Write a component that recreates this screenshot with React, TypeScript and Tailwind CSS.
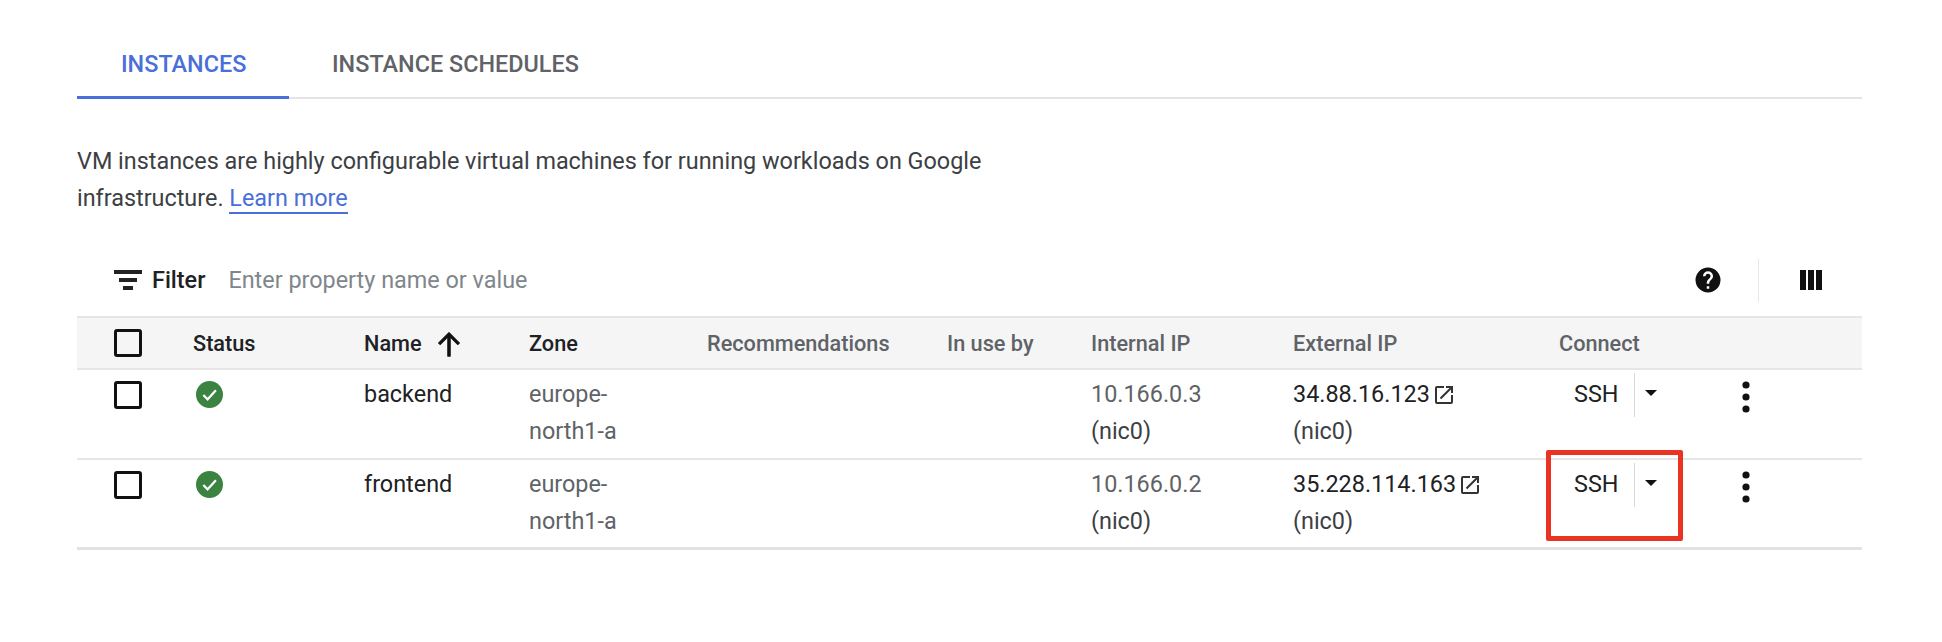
const columns = "grid grid-cols-[79px_171px_165px_178px_240px_144px_202px_266px_172px_1fr]";

function Checkbox() {
  return <div className="h-[28px] w-[28px] rounded-[3px] border-[3px] border-[#111]" />;
}

function StatusIcon() {
  return (
    <svg width="27" height="27" viewBox="0 0 24 24">
      <circle cx="12" cy="12" r="12" fill="#3a8341" />
      <path d="M6.5 12.5l3.8 3.8 7.4-8" fill="none" stroke="#fff" strokeWidth="2" />
    </svg>
  );
}

function OpenIcon() {
  return (
    <svg width="24" height="24" viewBox="0 0 24 24" fill="#333" className="ml-[2px] shrink-0">
      <path d="M19 19H5V5h7V3H5a2 2 0 0 0-2 2v14a2 2 0 0 0 2 2h14a2 2 0 0 0 2-2v-7h-2v7zM14 3v2h3.6l-9.8 9.8 1.4 1.4L19 6.4V10h2V3h-7z" />
    </svg>
  );
}

function Kebab() {
  return (
    <svg width="30" height="34" viewBox="0 0 30 34" fill="#111">
      <circle cx="15" cy="5" r="3.6" />
      <circle cx="15" cy="17" r="3.6" />
      <circle cx="15" cy="29" r="3.6" />
    </svg>
  );
}

function Row({ name, internal, external, last }: { name: string; internal: string; external: string; last?: boolean }) {
  return (
    <div className={`${columns} pl-[37px] ${last ? "h-[90px] border-b-[3px] border-[#e2e2e2]" : "h-[90px] border-b-2 border-[#e6e6e6]"}`}>
      <div className="pt-[11px]"><Checkbox /></div>
      <div className="pt-[11px] pl-[3px]"><StatusIcon /></div>
      <div className="pt-[6px] text-[#202124]">{name}</div>
      <div className="pt-[6px] text-[#5f6368]">europe-<br />north1-a</div>
      <div />
      <div />
      <div className="pt-[6px] text-[#5f6368]">{internal}<br /><span className="text-[#3c4043]">(nic0)</span></div>
      <div className="pt-[6px]">
        <div className="flex items-center text-[#202124]">{external}<OpenIcon /></div>
        <div className="text-[#3c4043]">(nic0)</div>
      </div>
      <div className="flex items-start pl-[15px] pt-[3px]">
        <span className="mt-[3px] w-[60px] text-[#202124]">SSH</span>
        <div className="h-[44px] w-px bg-[#d8d8d8]" />
        <div className="ml-[10px] mt-[17px] h-0 w-0 border-x-[6px] border-t-[6px] border-x-transparent border-t-[#111]" />
      </div>
      <div className="pt-[10px]"><Kebab /></div>
    </div>
  );
}

export default function App() {
  return (
    <div className="relative h-[642px] w-[1942px] overflow-hidden bg-white font-['Roboto',sans-serif] text-[23.4px] leading-[37px] pl-[77px] pr-[80px]">
      <div className="flex h-[99px] border-b-2 border-[#e4e4e4] pt-[44px] font-medium text-[#5f6368]">
        <div className="-mb-[2px] h-[55px] w-[212px] border-b-[3px] border-[#4a6fd8] pl-[44px] pt-[1px] leading-[38px] text-[#4a6fd8]">INSTANCES</div>
        <div className="pl-[43px] pt-[1px] leading-[38px]">INSTANCE SCHEDULES</div>
      </div>

      <p className="mt-[44px] w-[930px] text-[#3c4043]">
        VM instances are highly configurable virtual machines for running workloads on Google<br />
        infrastructure. <a className="border-b-2 border-[#4a6fd8] text-[#4a6fd8]">Learn more</a>
      </p>

      <div className="mt-[33px] flex h-[60px] items-center">
        <svg width="28" height="24" viewBox="0 0 28 24" fill="#222" className="ml-[37px]">
          <rect x="0" y="2" width="28" height="4" />
          <rect x="5" y="10" width="18" height="4" />
          <rect x="9" y="18" width="10" height="4" />
        </svg>
        <span className="ml-[10px] font-medium text-[#202124]">Filter</span>
        <span className="ml-[23px] text-[#80868b]">Enter property name or value</span>
        <div className="ml-auto flex items-center">
          <svg width="30" height="30" viewBox="0 0 24 24" fill="#111">
            <path d="M12 2a10 10 0 1 0 0 20 10 10 0 0 0 0-20zm1 17h-2v-2h2v2zm2.07-7.75l-.9.92c-.72.73-1.17 1.33-1.17 2.83h-2v-.5c0-1.1.45-2.1 1.17-2.83l1.24-1.26c.37-.36.59-.86.59-1.41a2 2 0 0 0-4 0H8a4 4 0 0 1 8 0c0 .88-.36 1.68-.93 2.25z" />
          </svg>
          <div className="ml-[35px] h-[43px] w-px bg-[#e6e6e6]" />
          <svg width="24" height="24" viewBox="0 0 24 24" fill="#111" className="ml-[40px] mr-[39px]">
            <rect x="1" y="2" width="6" height="20" />
            <rect x="9" y="2" width="6" height="20" />
            <rect x="17" y="2" width="6" height="20" />
          </svg>
        </div>
      </div>

      <div className={`${columns} mt-[6px] h-[54px] items-center border-y-2 border-[#e6e6e6] bg-[#f5f5f5] pl-[37px] text-[21.7px] font-medium text-[#5f6368]`}>
        <Checkbox />
        <span className="text-[#202124]">Status</span>
        <span className="flex items-center text-[#202124]">
          Name
          <svg width="32" height="32" viewBox="0 0 24 24" fill="#111" className="ml-[11px]">
            <path d="M4 12l1.41 1.41L11 7.83V22h2V7.83l5.58 5.59L20 12l-8-8-8 8z" stroke="#111" strokeWidth="0.6" />
          </svg>
        </span>
        <span className="text-[#202124]">Zone</span>
        <span>Recommendations</span>
        <span>In use by</span>
        <span>Internal IP</span>
        <span>External IP</span>
        <span>Connect</span>
      </div>

      <Row name="backend" internal="10.166.0.3" external="34.88.16.123" />
      <Row name="frontend" internal="10.166.0.2" external="35.228.114.163" last />

      <div className="absolute left-[1546px] top-[450px] h-[91px] w-[137px] rounded-[2px] border-[5px] border-[#ea3323]" />
    </div>
  );
}
